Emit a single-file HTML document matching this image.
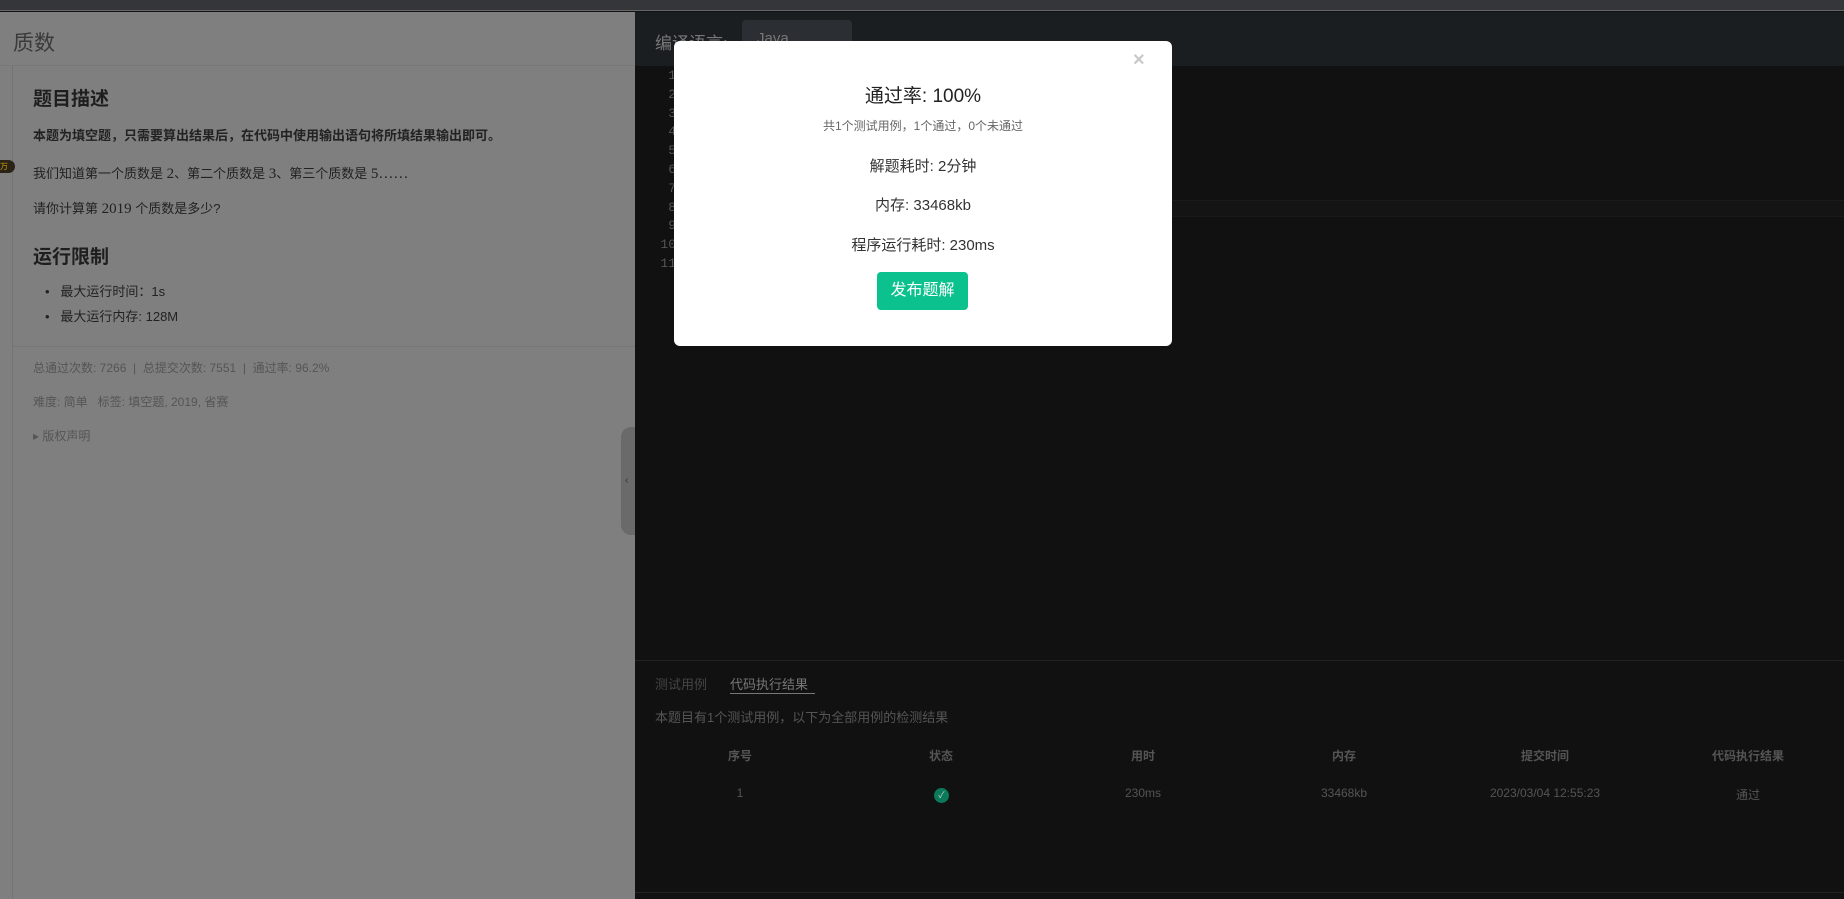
<!DOCTYPE html>
<html><head><meta charset="utf-8"><style>
*{margin:0;padding:0;box-sizing:border-box}
body{width:1844px;height:899px;overflow:hidden;background:#111;font-family:"Liberation Sans","Noto Sans CJK SC",sans-serif;position:relative}
.a{position:absolute;white-space:nowrap}
</style></head><body>
<div class="a" style="left:0;top:0;width:1844px;height:11px;background:#35363a;border-bottom:1px solid #666"></div>
<!-- left panel -->
<div class="a" style="left:0;top:12px;width:635px;height:887px;background:#7f7f7f"></div>
<div class="a" style="left:13px;top:27px;font-size:21px;color:#3a3a3a">质数</div>
<div class="a" style="left:0;top:65px;width:635px;height:1px;background:#777"></div>
<div class="a" style="left:12px;top:66px;width:1px;height:833px;background:#747474"></div>
<div class="a" style="left:33px;top:84px;font-size:19px;font-weight:bold;color:#1e1e1e">题目描述</div>
<div class="a" style="left:33px;top:125px;font-size:13px;font-weight:bold;color:#222">本题为填空题，只需要算出结果后，在代码中使用输出语句将所填结果输出即可。</div>
<div class="a" style="left:33px;top:163px;font-size:13px;color:#222">我们知道第一个质数是 <span style="font-family:'Liberation Serif',serif;font-size:15px">2</span>、第二个质数是 <span style="font-family:'Liberation Serif',serif;font-size:15px">3</span>、第三个质数是 <span style="font-family:'Liberation Serif',serif;font-size:15px">5……</span></div>
<div class="a" style="left:33px;top:198px;font-size:13px;color:#222">请你计算第 <span style="font-family:'Liberation Serif',serif;font-size:15px">2019</span> 个质数是多少?</div>
<div class="a" style="left:33px;top:242px;font-size:19px;font-weight:bold;color:#1e1e1e">运行限制</div>
<div class="a" style="left:45px;top:281px;font-size:13px;color:#222">•&nbsp;&nbsp;&nbsp;最大运行时间：1s</div>
<div class="a" style="left:45px;top:306px;font-size:13px;color:#222">•&nbsp;&nbsp;&nbsp;最大运行内存: 128M</div>
<div class="a" style="left:13px;top:346px;width:622px;height:1px;background:#777"></div>
<div class="a" style="left:33px;top:359px;font-size:12px;color:#555">总通过次数: 7266 &nbsp;|&nbsp; 总提交次数: 7551 &nbsp;|&nbsp; 通过率: 96.2%</div>
<div class="a" style="left:33px;top:393px;font-size:12px;color:#555">难度: 简单 &nbsp; 标签: 填空题, 2019, 省赛</div>
<div class="a" style="left:33px;top:427px;font-size:12px;color:#555">▸ 版权声明</div>
<div class="a" style="left:0;top:160px;width:15px;height:13px;background:#2a2418;border-radius:0 7px 7px 0;font-size:8px;color:#c90;line-height:13px">万</div>
<div class="a" style="left:621px;top:427px;width:14px;height:108px;background:#6a6a6a;border-radius:10px 0 0 10px;font-size:10px;color:#333;line-height:108px;padding-left:4px">‹</div>
<!-- right -->
<div class="a" style="left:635px;top:12px;width:1209px;height:54px;background:#1b1e21"></div>
<div class="a" style="left:655px;top:29px;font-size:17px;color:#777">编译语言:</div>
<div class="a" style="left:742px;top:20px;width:110px;height:40px;background:#2b2f33;border-radius:4px;color:#777;font-size:15px;padding:10px 15px">Java</div>
<div class="a" style="left:648px;top:67px;font-family:'Liberation Mono',monospace;font-size:13px;color:#555;line-height:18.8px;text-align:right;width:28px;white-space:pre">1
2
3
4
5
6
7
8
9
10
11</div>
<div class="a" style="left:680px;top:200px;width:1164px;height:17px;background:#141414;border-top:1px solid #1a1a1a;border-bottom:1px solid #1a1a1a"></div>
<div class="a" style="left:635px;top:660px;width:1209px;height:1px;background:#222"></div>
<div class="a" style="left:655px;top:674px;font-size:13px;color:#444">测试用例</div>
<div class="a" style="left:730px;top:674px;font-size:13px;color:#777">代码执行结果</div>
<div class="a" style="left:730px;top:693px;width:85px;height:1px;background:#777"></div>
<div class="a" style="left:655px;top:707px;font-size:13px;color:#555">本题目有1个测试用例，以下为全部用例的检测结果</div>
<div class="a" style="left:740px;top:747px;font-size:12px;font-weight:bold;color:#555;transform:translateX(-50%)">序号</div>
<div class="a" style="left:941px;top:747px;font-size:12px;font-weight:bold;color:#555;transform:translateX(-50%)">状态</div>
<div class="a" style="left:1143px;top:747px;font-size:12px;font-weight:bold;color:#555;transform:translateX(-50%)">用时</div>
<div class="a" style="left:1344px;top:747px;font-size:12px;font-weight:bold;color:#555;transform:translateX(-50%)">内存</div>
<div class="a" style="left:1545px;top:747px;font-size:12px;font-weight:bold;color:#555;transform:translateX(-50%)">提交时间</div>
<div class="a" style="left:1748px;top:747px;font-size:12px;font-weight:bold;color:#555;transform:translateX(-50%)">代码执行结果</div>
<div class="a" style="left:740px;top:786px;font-size:12px;color:#555;transform:translateX(-50%)">1</div>
<div class="a" style="left:934px;top:788px;width:15px;height:15px;border-radius:50%;background:#0a7a5a;color:#ccc;font-size:9px;line-height:15px;text-align:center">✓</div>
<div class="a" style="left:1143px;top:786px;font-size:12px;color:#555;transform:translateX(-50%)">230ms</div>
<div class="a" style="left:1344px;top:786px;font-size:12px;color:#555;transform:translateX(-50%)">33468kb</div>
<div class="a" style="left:1545px;top:786px;font-size:12px;color:#555;transform:translateX(-50%)">2023/03/04 12:55:23</div>
<div class="a" style="left:1748px;top:786px;font-size:12px;color:#555;transform:translateX(-50%)">通过</div>
<div class="a" style="left:635px;top:892px;width:1209px;height:1px;background:#222"></div>
<!-- modal -->
<div class="a" style="left:674px;top:41px;width:498px;height:305px;background:#fff;border-radius:6px">
<div class="a" style="left:459px;top:8px;font-size:20px;font-weight:bold;color:#c8c8c8">×</div>
<div class="a" style="left:0;width:498px;text-align:center;top:40px;font-size:19px;color:#222">通过率: 100%</div>
<div class="a" style="left:0;width:498px;text-align:center;top:76px;font-size:12px;color:#666">共1个测试用例，1个通过，0个未通过</div>
<div class="a" style="left:0;width:498px;text-align:center;top:114px;font-size:15px;color:#333">解题耗时: 2分钟</div>
<div class="a" style="left:0;width:498px;text-align:center;top:153px;font-size:15px;color:#333">内存: 33468kb</div>
<div class="a" style="left:0;width:498px;text-align:center;top:193px;font-size:15px;color:#333">程序运行耗时: 230ms</div>
<div class="a" style="left:203px;top:231px;width:91px;height:38px;background:#0bc18e;border-radius:4px;color:#fff;font-size:16px;text-align:center;line-height:38px">发布题解</div>
</div>
</body></html>
